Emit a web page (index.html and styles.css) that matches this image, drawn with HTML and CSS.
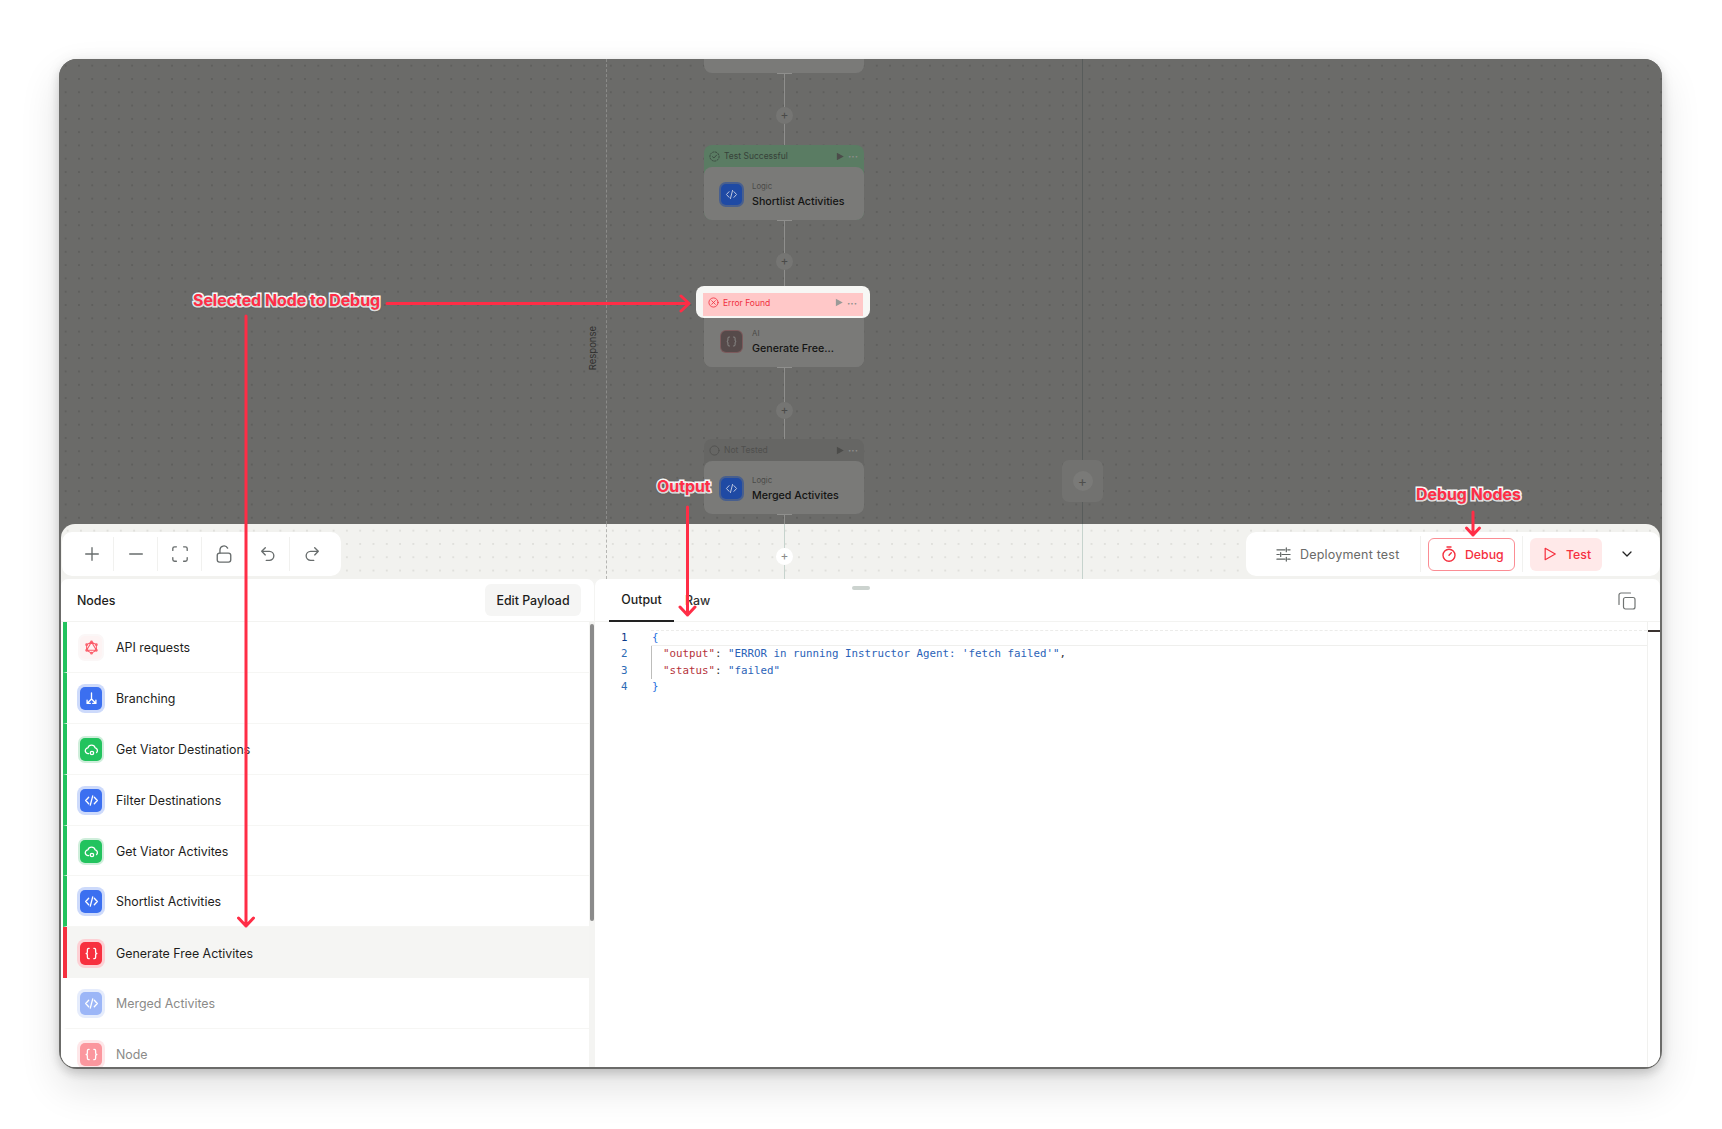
FILE: index.html
```html
<!DOCTYPE html>
<html lang="en">
<head>
  <meta charset="UTF-8">
  <title>Workflow Debug</title>
  <link rel="stylesheet" href="styles.css">
</head>
<body>
  <svg class="icon-defs" width="0" height="0">
    <symbol id="i-code" viewBox="0 0 16 16"><path d="M5 4.5 1.8 8 5 11.5M11 4.5 14.2 8 11 11.5M9.3 3 6.7 13"/></symbol>
    <symbol id="i-braces" viewBox="0 0 16 16"><path d="M5.5 2.5H5c-1 0-1.4.5-1.4 1.4v2.4C3.600 7.300 3.100 8 2.300 8c.8 0 1.300.7 1.300 1.700v2.400c0 .9.4 1.400 1.400 1.400h.5M10.500 2.500h.5c1 0 1.400.5 1.400 1.400v2.400c0 1 .5 1.700 1.300 1.700-.8 0-1.300.7-1.300 1.700v2.400c0 .9-.4 1.400-1.400 1.400h-.5"/></symbol>
    <symbol id="i-branch" viewBox="0 0 16 16"><path d="M8 2v6.500L3.500 13M8 8.500l4.500 4.500M3.300 9.800V13.200H6.700M12.700 9.800V13.200H9.300"/></symbol>
    <symbol id="i-cloud" viewBox="0 0 16 16"><path d="M5 12.300H4.500A3 3 0 0 1 4.200 6.300 4 4 0 0 1 11.900 6.200 3 3 0 0 1 13.500 11.200"/><circle cx="8.500" cy="11.700" r="1.800"/></symbol>
    <symbol id="i-graph" viewBox="0 0 16 16"><path d="M8 2 13.200 5v6L8 14 2.800 11V5ZM8 2 2.800 11H13.200Z"/><circle cx="8" cy="2" r=".9"/><circle cx="13.200" cy="5" r=".9"/><circle cx="13.200" cy="11" r=".9"/><circle cx="8" cy="14" r=".9"/><circle cx="2.800" cy="11" r=".9"/><circle cx="2.800" cy="5" r=".9"/></symbol>
    <symbol id="i-play" viewBox="0 0 16 16"><path d="M3 2 14 8 3 14Z"/></symbol>
  </svg>

  <div class="window">
    <div class="canvas">
      <div class="guide-dashed"></div>
      <div class="guide-solid"></div>
      <div class="side-label">Response</div>

      <div class="link link-a"></div>
      <div class="plus plus-a">+</div>
      <div class="link link-b"></div>
      <div class="plus plus-b">+</div>
      <div class="link link-c"></div>
      <div class="plus plus-c">+</div>
      <div class="link link-d"></div>

      <div class="node node-cut"></div>

      <div class="node node-ok">
        <div class="node-head">
          <svg class="status" viewBox="0 0 12 12"><circle cx="6" cy="6" r="5" stroke-dasharray="1.500 1.500"/><path d="M3.800 6.200 5.400 7.600 8.400 4.400"/></svg>
          <span class="head-text">Test Successful</span>
          <svg class="head-play"><use href="#i-play"/></svg>
          <span class="head-dots">···</span>
        </div>
        <div class="node-body">
          <div class="node-tile tile-blue"><svg><use href="#i-code"/></svg></div>
          <div>
            <div class="node-kind">Logic</div>
            <div class="node-title">Shortlist Activities</div>
          </div>
        </div>
      </div>

      <div class="node node-err">
        <div class="node-body">
          <div class="node-tile tile-brown"><svg><use href="#i-braces"/></svg></div>
          <div>
            <div class="node-kind">AI</div>
            <div class="node-title">Generate Free…</div>
          </div>
        </div>
      </div>
      <div class="err-halo">
        <div class="node-head err-head">
          <svg class="status" viewBox="0 0 12 12"><circle cx="6" cy="6" r="5"/><path d="M4 4 8 8M8 4 4 8"/></svg>
          <span class="head-text">Error Found</span>
          <svg class="head-play"><use href="#i-play"/></svg>
          <span class="head-dots">···</span>
        </div>
      </div>

      <div class="node node-idle">
        <div class="node-head">
          <svg class="status" viewBox="0 0 12 12"><circle cx="6" cy="6" r="5"/></svg>
          <span class="head-text">Not Tested</span>
          <svg class="head-play"><use href="#i-play"/></svg>
          <span class="head-dots">···</span>
        </div>
        <div class="node-body">
          <div class="node-tile tile-blue"><svg><use href="#i-code"/></svg></div>
          <div>
            <div class="node-kind">Logic</div>
            <div class="node-title">Merged Activites</div>
          </div>
        </div>
      </div>

      <div class="add-branch"><span class="add-circle">+</span></div>
    </div>

    <div class="panel">
      <div class="strip">
        <div class="strip-dashed"></div>
        <div class="strip-line strip-line-a"></div>
        <div class="strip-line strip-line-b"></div>
        <div class="strip-plus">+</div>

        <div class="tools">
          <button class="tool"><svg viewBox="0 0 20 20"><path d="M10 3v14M3 10h14"/></svg></button>
          <button class="tool"><svg viewBox="0 0 20 20"><path d="M3 10h14"/></svg></button>
          <button class="tool"><svg viewBox="0 0 20 20"><path d="M2 6V4a2 2 0 0 1 2-2h2M14 2h2a2 2 0 0 1 2 2v2M18 14v2a2 2 0 0 1-2 2h-2M6 18H4a2 2 0 0 1-2-2v-2"/></svg></button>
          <button class="tool"><svg viewBox="0 0 20 20"><rect x="2.500" y="9" width="15" height="10" rx="2.500"/><path d="M5.500 9V5.500a4.500 4.500 0 0 1 8.500-2"/></svg></button>
          <button class="tool"><svg viewBox="0 0 20 20"><path d="M7 3 3 7l4 4M3 7h8.500a5 5 0 0 1 0 10H8"/></svg></button>
          <button class="tool"><svg viewBox="0 0 20 20"><path d="M13 3l4 4-4 4M17 7H8.500a5 5 0 0 0 0 10H12"/></svg></button>
        </div>

        <div class="actions">
          <div class="deploy">
            <svg viewBox="0 0 16 16"><path d="M1 3h8.500M12.500 3H15M11 1v4M1 8h2.500M6.500 8H15M5 6v4M1 13h8.500M12.500 13H15M11 11v4"/></svg>
            <span>Deployment test</span>
          </div>
          <div class="act-sep"></div>
          <button class="btn btn-debug">
            <svg viewBox="0 0 16 16"><circle cx="8" cy="9.300" r="6"/><path d="M6 1h4M8 9.300l2.300-2.500"/></svg>
            Debug
          </button>
          <div class="act-sep"></div>
          <button class="btn btn-test">
            <svg viewBox="0 0 16 16"><path d="M2.500 1.500 14 8 2.500 14.500Z"/></svg>
            Test
          </button>
          <svg class="chevron" viewBox="0 0 10 6"><path d="M1 1l4 4 4-4"/></svg>
        </div>
      </div>

      <div class="panes">
        <div class="nodes-pane">
          <div class="pane-head">
            <span class="pane-title">Nodes</span>
            <button class="btn-payload">Edit Payload</button>
          </div>
          <div class="nodes-body">
            <div class="rows">
              <div class="row is-ok">
                <div class="tile tile-api"><svg><use href="#i-graph"/></svg></div>
                API requests
              </div>
              <div class="row is-ok">
                <div class="tile tile-b"><svg><use href="#i-branch"/></svg></div>
                Branching
              </div>
              <div class="row is-ok">
                <div class="tile tile-g"><svg><use href="#i-cloud"/></svg></div>
                Get Viator Destinations
              </div>
              <div class="row is-ok">
                <div class="tile tile-b"><svg><use href="#i-code"/></svg></div>
                Filter Destinations
              </div>
              <div class="row is-ok">
                <div class="tile tile-g"><svg><use href="#i-cloud"/></svg></div>
                Get Viator Activites
              </div>
              <div class="row is-ok">
                <div class="tile tile-b"><svg><use href="#i-code"/></svg></div>
                Shortlist Activities
              </div>
              <div class="row is-err">
                <div class="tile tile-r"><svg><use href="#i-braces"/></svg></div>
                Generate Free Activites
              </div>
              <div class="row is-idle">
                <div class="tile tile-b"><svg><use href="#i-code"/></svg></div>
                Merged Activites
              </div>
              <div class="row is-idle">
                <div class="tile tile-r"><svg><use href="#i-braces"/></svg></div>
                Node
              </div>
            </div>
            <div class="gutter"><div class="thumb"></div></div>
          </div>
        </div>

        <div class="output-pane">
          <div class="handle"></div>
          <div class="output-head">
            <div class="tab tab-on">Output</div>
            <div class="tab">Raw</div>
            <svg class="copy" viewBox="0 0 18 18"><rect x="5.500" y="5.500" width="11.500" height="11.500" rx="2"/><path d="M12.500 1H3a2 2 0 0 0-2 2v9.500"/></svg>
          </div>
          <div class="code-wrap">
            <div class="code">
              <div class="nums">
                <div class="num-on">1</div>
                <div>2</div>
                <div>3</div>
                <div>4</div>
              </div>
              <div class="lines">
                <div class="line line-on"><span class="c-brace">{</span></div>
                <div class="line line-in"><span class="c-key">"output"</span>: <span class="c-val">"ERROR in running Instructor Agent: 'fetch failed'"</span>,</div>
                <div class="line line-in"><span class="c-key">"status"</span>: <span class="c-val">"failed"</span></div>
                <div class="line"><span class="c-brace">}</span></div>
              </div>
            </div>
            <div class="minimap"><div class="minimap-mark"></div></div>
          </div>
        </div>
      </div>
    </div>
  </div>

  <!-- annotations drawn on top of the screenshot -->
  <svg class="arrows" width="1722" height="1129" viewBox="0 0 1722 1129">
    <path d="M387 303.500H688M681 296l8 7.500-8 7.500"/>
    <path d="M246 316V926M238.500 918l7.500 8 7.500-8"/>
    <path d="M687.500 507V615M680 607l7.500 8 7.500-8"/>
    <path d="M1473 512V535M1466.500 528l6.500 7 6.500-7"/>
  </svg>
  <div class="note note-selected">Selected Node to Debug</div>
  <div class="note note-output">Output</div>
  <div class="note note-debug">Debug Nodes</div>
</body>
</html>
```

FILE: styles.css
```css
* { box-sizing: border-box; }
html, body { margin: 0; height: 1129px; overflow: hidden; }
body { position: relative; padding: 59px 60px 0 59px; background: #fff; font-family: Inter, "Liberation Sans", sans-serif; color: #1d1d1b; }
button { font-family: inherit; border: none; padding: 0; background: none; }
svg { fill: none; stroke: currentColor; stroke-linecap: round; stroke-linejoin: round; }
.icon-defs { position: absolute; }

.window { height: 1010px; display: flex; flex-direction: column; border-radius: 18px; background: #6b6b69; box-shadow: 0 18px 40px rgba(0,0,0,.12), 0 5px 10px rgba(0,0,0,.14), 0 0 16px rgba(0,0,0,.05); overflow: hidden; }

/* dimmed canvas */
.canvas { position: relative; height: 465px; flex: none; overflow: hidden; background-color: #6b6b69; background-image: radial-gradient(circle, #5f5f5d .7px, transparent 1px); background-size: 13.3px 13.3px; }
.guide-dashed { position: absolute; left: 547px; top: 0; bottom: 0; border-left: 1px dashed #8b8b89; }
.guide-solid { position: absolute; left: 1023px; top: 0; bottom: 0; border-left: 1px solid #585c5b; }
.side-label { position: absolute; left: 528px; top: 267px; writing-mode: vertical-rl; transform: rotate(180deg); font-size: 9.500px; color: #2f2f2e; }

.link { position: absolute; left: 725px; width: 1px; background: #8f8f8d; }
.link::before { content: ""; position: absolute; top: 0; left: -7px; width: 15px; height: 1px; background: #8f8f8d; }
.link-a { top: 14px; height: 72px; }
.link-b { top: 161px; height: 66px; }
.link-c { top: 308px; height: 72px; }
.link-d { top: 455px; height: 10px; }
.plus { position: absolute; left: 717px; width: 17px; height: 17px; border-radius: 50%; background: #757573; color: #4a4a48; font-size: 12px; line-height: 16px; text-align: center; }
.plus-a { top: 48px; }
.plus-b { top: 194px; }
.plus-c { top: 343px; }

.node { position: absolute; left: 645px; width: 160px; border-radius: 8px; }
.node-cut { top: -40px; height: 54px; background: #7a7a78; }
.node-ok { top: 86px; background: #5a7c63; }
.node-err { top: 233px; height: 75px; background: #7a7a78; }
.node-idle { top: 380px; background: #666664; }
.node-head { height: 22px; display: flex; align-items: center; padding: 0 6px 0 5px; font-size: 8.500px; color: #37423a; }
.node-idle .node-head { color: #50504e; }
.status { width: 11px; height: 11px; stroke-width: .9; margin-right: 4px; }
.head-text { flex: 1; }
.head-play { width: 10px; height: 11px; fill: #4c4c4a; stroke: none; margin-right: 3px; }
.head-dots { width: 10px; color: #8d8d8b; font-size: 10px; line-height: 10px; font-weight: 700; }
.node-body { height: 53px; border-radius: 8px; background: #7a7a78; display: flex; align-items: center; gap: 10px; padding: 2px 0 0 17px; }
.node-err .node-body { margin-top: 22px; }
.node-tile { width: 21px; height: 21px; flex: none; border-radius: 5px; display: flex; align-items: center; justify-content: center; }
.node-tile svg { width: 13px; height: 13px; stroke-width: 1.200; }
.tile-blue { background: #1f4aa4; color: #c3cbe0; box-shadow: 0 0 0 2px #485f8e; }
.tile-brown { background: #564a4a; color: #8a8a88; box-shadow: 0 0 0 1px #7c5a5c; }
.node-kind { font-size: 7.800px; color: #4b4b49; line-height: 10px; margin-bottom: 4px; }
.node-title { font-size: 10.700px; font-weight: 500; color: #141413; line-height: 13px; white-space: nowrap; }
.err-halo { position: absolute; left: 637px; top: 227px; width: 174px; height: 32px; padding: 7px 7px 2px; border-radius: 8px; background: #f7f7f5; }
.err-head { background: #ffc8c8; color: #f02f3f; height: 23px; padding-bottom: 4px; }
.err-head .head-play { fill: #9a9a98; }
.err-head .head-dots { color: #8f8f8d; }
.add-branch { position: absolute; left: 1003px; top: 401px; width: 41px; height: 42px; border-radius: 7px; background: #727270; display: flex; align-items: center; justify-content: center; }
.add-circle { width: 20px; height: 20px; border-radius: 50%; background: #7a7a78; color: #4f4f4d; font-size: 14px; line-height: 19px; text-align: center; }

/* bottom panel */
.panel { flex: 1; margin: 0 2px 2px; display: flex; flex-direction: column; border-radius: 14px; background: #f2f2ef; overflow: hidden; }
.strip { position: relative; height: 55px; flex: none; padding: 8px 0 3px 1px; display: flex; justify-content: space-between; background-image: radial-gradient(circle, #e0e0dc .7px, transparent 1px); background-size: 13.3px 13.3px; }
.strip-dashed { position: absolute; left: 545px; top: 0; bottom: 0; border-left: 1px dashed #b5b5b2; }
.strip-line { position: absolute; top: 0; bottom: 0; width: 1px; background: #c6d3cd; }
.strip-line-a { left: 723px; }
.strip-line-b { left: 1021px; }
.strip-plus { position: absolute; left: 715px; top: 24px; width: 17px; height: 17px; border-radius: 50%; background: #fff; color: #8b8b89; font-size: 12px; line-height: 16px; text-align: center; }
.tools { position: relative; height: 44px; padding: 0 7px 0 8px; display: flex; align-items: center; background: #fff; border-radius: 10px; }
.tool { width: 44px; height: 34px; display: flex; align-items: center; justify-content: center; border-right: 1px solid #f1f1ef; color: #686d6d; }
.tool:last-child { border-right: none; }
.tool svg { width: 18px; height: 18px; stroke-width: 1.500; }

.actions { position: relative; width: 414px; height: 44px; padding-left: 30px; display: flex; align-items: center; background: #fff; border-radius: 10px; }
.deploy { display: flex; align-items: center; gap: 9px; font-size: 12.500px; color: #6a6a68; letter-spacing: .2px; width: 144px; }
.deploy svg { width: 15px; height: 15px; stroke-width: 1.300; color: #5f6463; }
.act-sep { width: 1px; height: 36px; background: #f1f1ef; }
.btn { height: 33px; display: flex; align-items: center; font-size: 12.300px; font-weight: 500; color: #f5303f; border-radius: 6px; }
.btn svg { stroke-width: 1.400; }
.btn-debug { width: 87px; margin: 0 7px; padding-left: 12px; gap: 8px; border: 1px solid #fb8d94; background: #fff; }
.btn-debug svg { width: 16px; height: 16px; }
.btn-test { width: 72px; margin: 0 0 0 7px; padding-left: 13px; gap: 9px; background: #ffe9e9; }
.btn-test svg { width: 14px; height: 16px; }
.chevron { width: 10px; height: 6px; margin-left: 20px; color: #222; stroke-width: 1.300; }

.panes { flex: 1; min-height: 0; display: grid; grid-template-columns: 533px 1fr; column-gap: 1px; background: #f4f4f2; }
.nodes-pane, .output-pane { min-height: 0; display: flex; flex-direction: column; background: #fff; border-radius: 7px 7px 0 0; overflow: hidden; }
.pane-head { height: 43px; flex: none; display: flex; align-items: center; justify-content: space-between; padding: 0 13px 0 16px; border-bottom: 1px solid #f3f3f1; }
.pane-title { font-size: 12.400px; font-weight: 500; }
.btn-payload { width: 96px; height: 32px; border-radius: 6px; background: #f5f5f4; font-size: 12.400px; font-weight: 500; color: #1d1d1b; }

.nodes-body { flex: 1; min-height: 0; display: flex; }
.rows { width: 528px; flex: none; overflow: hidden; }
.row { height: 50.900px; margin-left: 2px; padding: 1px 0 0 13px; display: flex; align-items: center; gap: 14px; font-size: 12.400px; border-left: 4px solid transparent; border-bottom: 1px solid #f6f6f4; white-space: nowrap; }
.is-ok { border-left-color: #22c35e; }
.is-err { border-left-color: #f5303f; background: #f5f5f3; border-bottom: none; }
.is-idle { color: #8a8a88; }
.tile { width: 22px; height: 23px; flex: none; border-radius: 5px; display: flex; align-items: center; justify-content: center; color: #fff; }
.tile svg { width: 15px; height: 15px; stroke-width: 1.400; }
.tile-b { background: #3b6ff0; box-shadow: 0 0 0 3px #cddafb; }
.tile-g { background: #22c35e; box-shadow: 0 0 0 2px #cfeedb; }
.tile-r { background: #f7303f; box-shadow: 0 0 0 3px #fdd0d4; }
.tile-api { background: #fdf3f3; box-shadow: 0 0 0 2px #fbf7f7; color: #fb5b68; }
.tile-api svg { stroke-width: 1.100; }
.is-idle .tile { opacity: .5; }
.gutter { flex: 1; background: #f4f4f2; padding: 2px 1px 0 1px; }
.thumb { width: 4px; height: 297px; border-radius: 2px; background: #8b8b8b; }

.output-pane { position: relative; }
.handle { position: absolute; left: 257px; top: 7px; width: 18px; height: 4px; border-radius: 2px; background: #ccd3cf; }
.output-head { position: relative; height: 43px; flex: none; display: flex; padding-left: 14px; border-bottom: 1px solid #f3f3f1; }
.tab { height: 43px; padding: 0 11px; display: flex; align-items: center; font-size: 12.400px; font-weight: 500; color: #333; }
.tab-on { width: 65px; justify-content: center; color: #1d1d1b; border-bottom: 2px solid #222; }
.copy { position: absolute; right: 24px; top: 13px; width: 18px; height: 18px; color: #6f7372; stroke-width: 1.200; }
.code-wrap { flex: 1; min-height: 0; display: flex; }
.code { flex: 1; padding: 8px 0 0 0; display: flex; font-family: "DejaVu Sans Mono", "Liberation Mono", monospace; font-size: 10.800px; line-height: 16.300px; }
.nums { width: 56px; padding-left: 26px; color: #2d6bb5; flex: none; }
.num-on { color: #0b3a8a; }
.lines { flex: 1; }
.line { padding-left: 1px; color: #333; height: 16.300px; white-space: pre; }
.line-on { border-top: 1px dashed #ececea; border-bottom: 1px solid #efefed; line-height: 14.300px; }
.line-in { padding-left: 12px; box-shadow: inset 1px 0 0 #bdbdbb; }
.c-brace { color: #1f6fe0; }
.c-key { color: #b5333b; }
.c-val { color: #2b63b8; }
.minimap { width: 13px; flex: none; border-left: 1px solid #f1f1ef; padding-top: 8px; }
.minimap-mark { height: 2px; background: #3a3230; }

/* annotations */
.arrows { position: absolute; left: 0; top: 0; fill: none; stroke: #ff2d46; stroke-width: 3; }
.note { position: absolute; font-size: 15.900px; font-weight: 700; line-height: 20px; color: #ff2d46; white-space: nowrap; -webkit-text-stroke: 3px #fff; paint-order: stroke fill; text-shadow: 0 1px 3px rgba(0,0,0,.35); }
.note-selected { left: 193px; top: 291px; }
.note-output { left: 657px; top: 477px; }
.note-debug { left: 1416px; top: 485px; }
```
